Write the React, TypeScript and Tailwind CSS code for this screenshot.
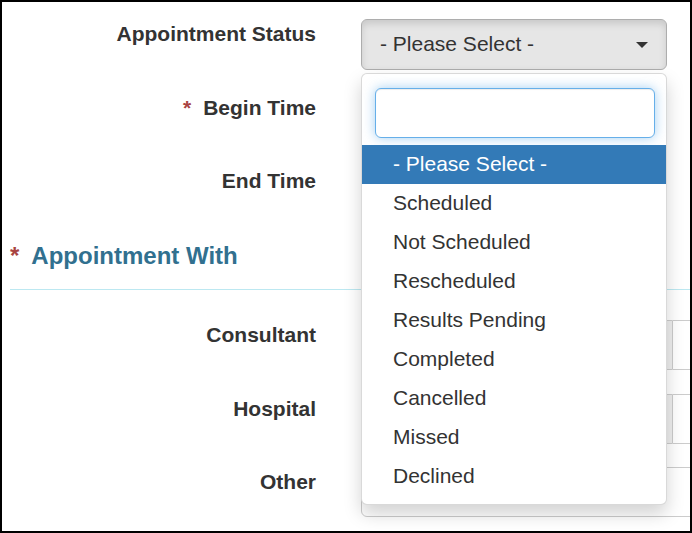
import React from "react";

const items = [
  "- Please Select -",
  "Scheduled",
  "Not Scheduled",
  "Rescheduled",
  "Results Pending",
  "Completed",
  "Cancelled",
  "Missed",
  "Declined",
];

function Label({ text, req }: { text: string; req?: boolean }) {
  return (
    <div className="w-[314px] shrink-0 text-right text-[21px] leading-[30px] font-bold text-[#333]">
      {req && <span className="text-[#a94442] mr-[12px]">*</span>}
      {text}
    </div>
  );
}

export default function App() {
  return (
    <div
      className="relative w-[692px] h-[533px] border-2 border-black overflow-hidden bg-white"
      style={{ fontFamily: '"Liberation Sans", Arial, sans-serif' }}
    >
      <div className="pt-[17px] flex flex-col gap-[22.5px]">
        <div className="flex">
          <Label text="Appointment Status" />
          <div className="ml-[45px] w-[306px] h-[51px] shrink-0 flex items-center justify-between pl-[18px] pr-[18px] pb-[2px] bg-[#e6e6e6] border border-[#adadad] rounded-[6px] shadow-[inset_0_4px_7px_rgba(0,0,0,0.125)] text-[21px] text-[#333]">
            <span>- Please Select -</span>
            <span className="w-0 h-0 mt-[2px] border-t-[6px] border-t-[#333] border-x-[6px] border-x-transparent"></span>
          </div>
        </div>
        <div className="flex">
          <Label text="Begin Time" req />
          <div className="ml-[45px] w-[306px] h-[51px] shrink-0 border border-[#ccc] rounded-[6px]"></div>
        </div>
        <div className="flex">
          <Label text="End Time" />
          <div className="ml-[45px] w-[306px] h-[51px] shrink-0 border border-[#ccc] rounded-[6px]"></div>
        </div>
      </div>

      <div className="ml-[8px] mt-[25px] text-[24px] leading-[27px] font-bold text-[#31708f] flex">
        <span className="text-[#a94442] mr-[12px]">*</span>
        <span>Appointment With</span>
      </div>
      <div className="ml-[8px] mt-[20px] h-px bg-[#bce8f1]"></div>

      <div className="mt-[30px] flex flex-col gap-[23.5px]">
        <div className="flex">
          <Label text="Consultant" />
          <div className="ml-[45px] h-[50px] flex shrink-0 w-[400px]">
            <div className="w-[312px] h-full bg-[#eee] border border-[#ccc] rounded-l-[6px]"></div>
            <div className="flex-1 h-full bg-white border border-l-0 border-[#ccc]"></div>
          </div>
        </div>
        <div className="flex">
          <Label text="Hospital" />
          <div className="ml-[45px] h-[50px] flex shrink-0 w-[400px]">
            <div className="w-[312px] h-full bg-[#eee] border border-[#ccc] rounded-l-[6px]"></div>
            <div className="flex-1 h-full bg-white border border-l-0 border-[#ccc]"></div>
          </div>
        </div>
        <div className="flex">
          <Label text="Other" />
          <div className="ml-[45px] h-[50px] shrink-0 w-[400px] border border-[#ccc] rounded-[6px] bg-white"></div>
        </div>
      </div>

      <div className="absolute left-[359px] top-[71px] w-[306px] bg-white border border-[rgba(0,0,0,0.15)] rounded-[6px] shadow-[0_9px_18px_rgba(0,0,0,0.175)] pt-[7px] pb-[8px]">
        <div className="pt-[7px] pb-[7px] pl-[13px] pr-[11px]">
          <div className="h-[50px] border border-[#66afe9] rounded-[6px] bg-white shadow-[inset_0_1px_1px_rgba(0,0,0,0.075),0_0_12px_rgba(102,175,233,0.6)]"></div>
        </div>
        <ul>
          {items.map((it, i) => (
            <li
              key={it}
              className={
                "h-[39px] flex items-center pl-[31px] pb-[2px] text-[21px] " +
                (i === 0 ? "bg-[#337ab7] text-white" : "text-[#333]")
              }
            >
              {it}
            </li>
          ))}
        </ul>
      </div>
    </div>
  );
}
